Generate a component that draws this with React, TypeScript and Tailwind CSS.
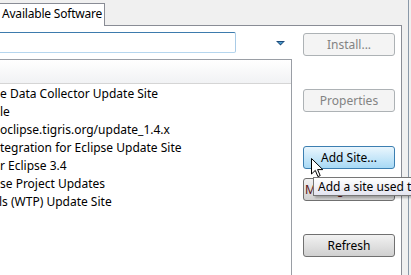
import React from 'react';

const rows = [
  { text: 'e Data Collector Update Site', shift: 0 },
  { text: 'le', shift: 0 },
  { text: 'oclipse.tigris.org/update_1.4.x', shift: 0 },
  { text: 'tegration for Eclipse Update Site', shift: 0 },
  { text: 'r Eclipse 3.4', shift: 0 },
  { text: 'se Project Updates', shift: 0 },
  { text: 'ls (WTP) Update Site', shift: -1 },
];

function DisabledButton({ label }: { label: string }) {
  return (
    <div className="h-[23px] w-[92px] rounded-[3px] border border-[#adb2b5] bg-[#f4f4f4] flex items-center justify-center text-[#838383]">
      {label}
    </div>
  );
}

function ArrowCursor() {
  return (
    <svg width="13" height="20" viewBox="0 0 13 20" className="absolute left-[311px] top-[158px]">
      <path
        d="M0.5 0.5 L0.5 16 L4.3 12.4 L6.9 18.6 L9.2 17.6 L6.6 11.6 L11.8 11.6 Z"
        fill="#ffffff"
        stroke="#000000"
        strokeWidth="1"
        strokeLinejoin="miter"
      />
    </svg>
  );
}

export default function App() {
  return (
    <div
      className="relative w-[411px] h-[275px] overflow-hidden bg-[#f0f0f0] text-[12px] text-black"
      style={{ fontFamily: '"Noto Sans", "Open Sans", sans-serif' }}
    >
      {/* right window edge */}
      <div className="absolute right-[2px] top-0 h-full w-px bg-[#8a98a8]" />

      {/* tab strip */}
      <div className="flex h-[26px] items-end">
        <div className="h-[23px] w-[105px] border-t border-r border-[#898c95] bg-white pl-[2px] leading-[20px] tracking-[-0.2px] whitespace-nowrap">
          Available Software
        </div>
        <div className="h-full w-[297px] border-b border-[#898c95]" />
      </div>

      {/* panel */}
      <div className="flex h-[249px] w-[402px] border-r border-[#898c95] bg-white">
        {/* left: filter + table */}
        <div className="flex w-[292px] flex-col">
          <div className="flex h-[33px] items-start pt-[6px]">
            <div className="h-[21px] w-[236px] border-t border-r border-b border-t-[#3d7bad] border-r-[#a9cbe6] border-b-[#b6d6ee] rounded-r-[2px] bg-white" />
            <svg width="10" height="6" viewBox="0 0 10 6" className="ml-[40px] mt-[9px]">
              <path d="M0 0 H9 L4.5 4.5 Z" fill="#1d4a7a" />
              <path d="M2 1 H7 L4.5 3.3 Z" fill="#4fa0cf" />
            </svg>
          </div>
          <div className="flex-1 border-t border-r border-[#9a9ea5] overflow-hidden">
            <div className="h-[24px] border-b border-[#d5d5d5] bg-gradient-to-b from-[#ffffff] to-[#f1f2f4]" />
            <div className="flex flex-col pt-px">
              {rows.map((r) => (
                <div key={r.text} className="h-[18px] leading-[18px] whitespace-nowrap" style={{ marginLeft: r.shift }}>
                  {r.text}
                </div>
              ))}
            </div>
          </div>
        </div>

        {/* right: buttons */}
        <div className="flex flex-col pl-[11px] pt-[7px]">
          <DisabledButton label="Install..." />
          <div className="mt-[33px]">
            <DisabledButton label="Properties" />
          </div>
          <div className="mt-[34px] h-[23px] w-[92px] rounded-[3px] border border-[#3c7fb1] bg-gradient-to-b from-[#eaf6fd] to-[#a7d9f5] flex items-center justify-center">
            Add Site...
          </div>
          <div className="mt-[9px] h-[23px] w-[92px] rounded-[3px] border border-[#707070] bg-gradient-to-b from-[#f2f2f2] to-[#d0d0d0] flex items-center pl-[1px] text-[#5a1010] overflow-hidden whitespace-nowrap">
            Manage...
          </div>
          <div className="mt-[33px] h-[23px] w-[92px] rounded-[3px] border border-[#707070] bg-gradient-to-b from-[#f2f2f2] to-[#d0d0d0] flex items-center justify-center">
            Refresh
          </div>
        </div>
      </div>

      {/* tooltip */}
      <div className="absolute left-[313px] top-[177px] h-[19px] w-[120px] border border-[#767676] bg-gradient-to-b from-[#ffffff] to-[#e4e5f0] pl-[4px] leading-[17px] whitespace-nowrap shadow-[2px_2px_2px_rgba(0,0,0,0.25)]">
        Add a site used to
      </div>

      <ArrowCursor />
    </div>
  );
}
